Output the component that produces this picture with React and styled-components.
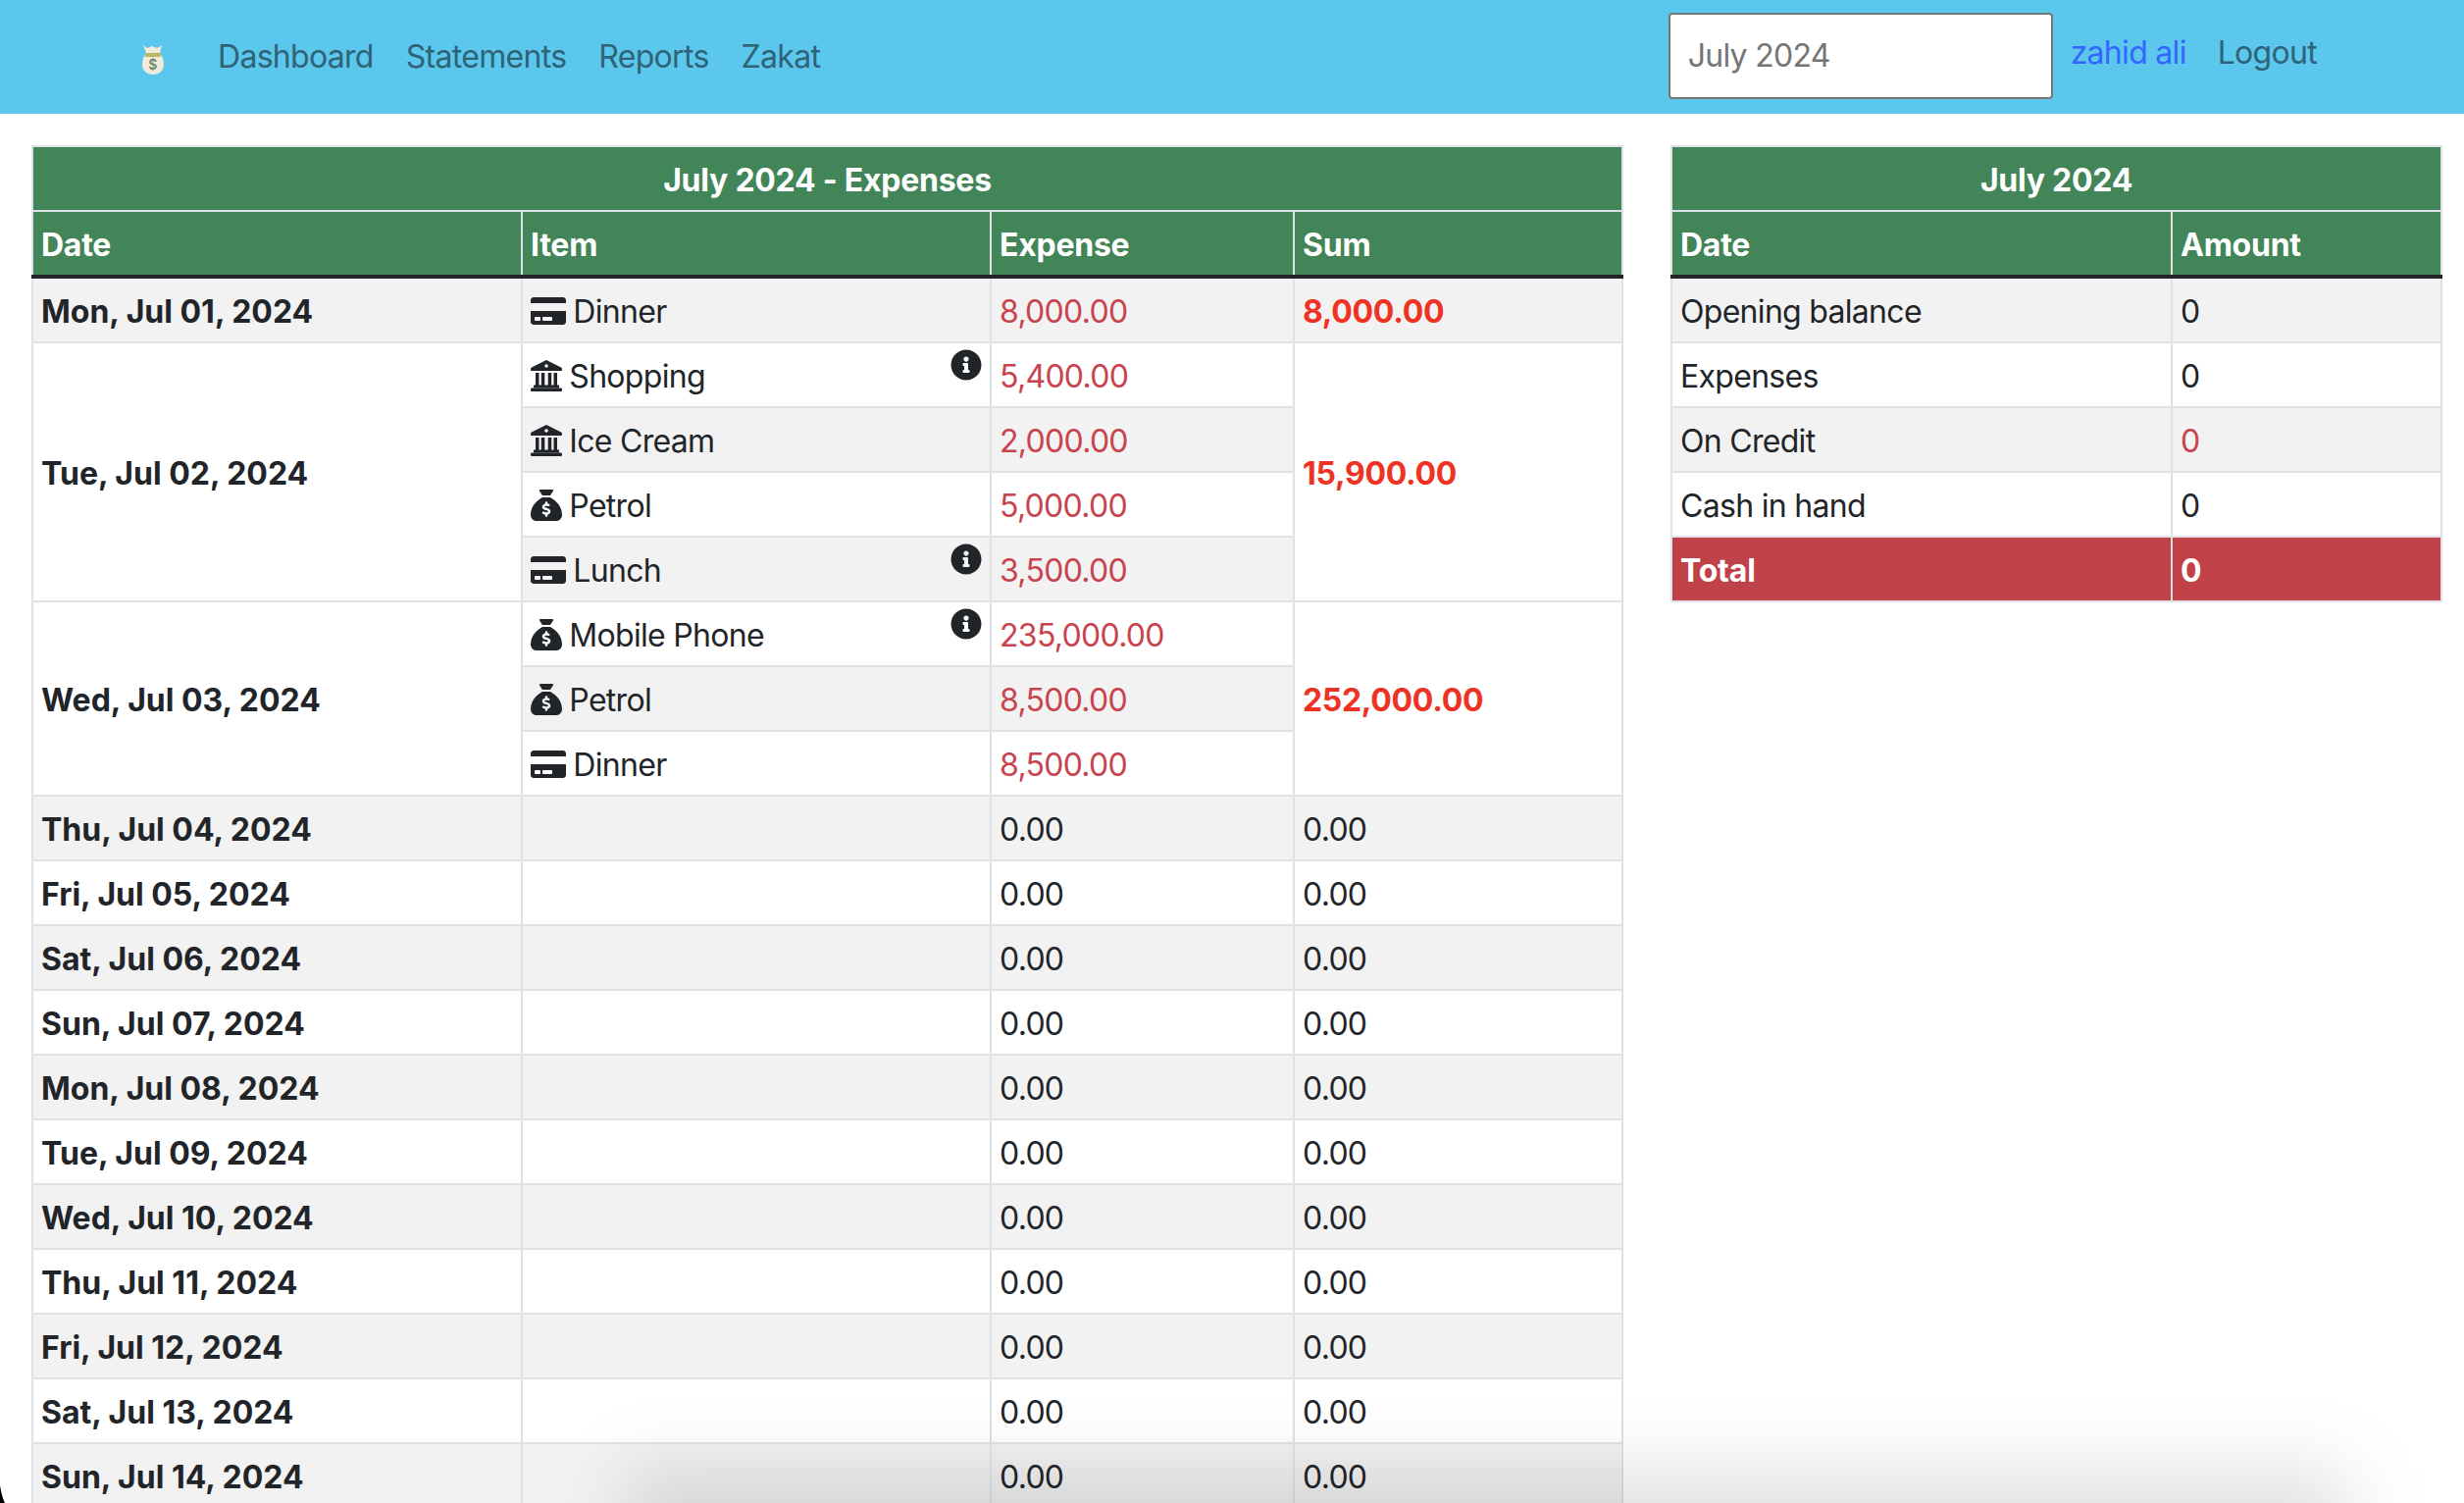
import React from 'react';
import styled, { createGlobalStyle } from 'styled-components';
import { FaCreditCard, FaInfoCircle } from 'react-icons/fa';
import { FaSackDollar } from 'react-icons/fa6';

const GlobalStyle = createGlobalStyle`
  html, body {
    margin: 0;
    height: 1532px;
    overflow: hidden;
    background: #fff;
  }
  body {
    font-family: Inter, "Liberation Sans", sans-serif;
    font-size: 32px;
    line-height: 48px;
    letter-spacing: -0.7px;
    color: #212529;
  }
`;

const Page = styled.div`
  position: relative;
  height: 1532px;
  overflow: hidden;
`;

const Navbar = styled.nav`
  display: flex;
  align-items: center;
  height: 116px;
  padding: 0 150px 0 144px;
  box-sizing: border-box;
  background: #5bc7ec;
`;

const Brand = styled.svg`
  width: 23px;
  height: 30px;
  margin: 6px 39px 0 0;
  flex: none;
`;

const NavLink = styled.a`
  padding: 0 16.5px;
  color: #2f6378;
  &:first-of-type {
    padding-left: 16px;
  }
`;

const NavRight = styled.div`
  display: flex;
  align-items: center;
  margin-left: auto;
`;

const MonthInput = styled.input`
  width: 392px;
  height: 88px;
  box-sizing: border-box;
  margin: -3px 18px 0 0;
  padding: 0 18px;
  border: 2px solid #767676;
  border-radius: 4px;
  background: #fff;
  font: inherit;
  letter-spacing: inherit;
  color: #757575;
  &::placeholder {
    color: #757575;
    opacity: 1;
  }
`;

const UserLink = styled.a`
  margin: -8px 32px 0 0;
  color: #3366ff;
`;

const LogoutLink = styled.a`
  margin-top: -8px;
  color: #2f6378;
`;

const Content = styled.main`
  display: flex;
  align-items: flex-start;
  justify-content: space-between;
  padding: 32px 22px 0 32px;
`;

const Table = styled.table`
  width: ${(p) => p.$width}px;
  flex: none;
  table-layout: fixed;
  border-collapse: collapse;
  border: 2px solid #dee2e6;

  & tbody > tr:nth-child(odd) {
    background: #f2f2f2;
  }
`;

const TitleCell = styled.th`
  padding: 10px 8px 6px;
  border: 2px solid #dee2e6;
  background: #418558;
  color: #fff;
  font-weight: 700;
  letter-spacing: -0.25px;
  text-align: center;
`;

const HeadCell = styled.th`
  padding: 10px 8px 6px;
  border: 2px solid #dee2e6;
  border-bottom: 4px solid #212529;
  background: #418558;
  color: #fff;
  font-weight: 700;
  letter-spacing: -0.25px;
  text-align: left;
`;

const Cell = styled.td`
  padding: 10px 8px 6px;
  border: 2px solid #dee2e6;
  vertical-align: middle;
  white-space: nowrap;
  color: #212529;
`;

const DateCell = styled(Cell)`
  font-weight: 700;
  letter-spacing: 0;
`;

const AmountCell = styled(Cell)`
  color: #c8434e;
`;

const SumCell = styled(Cell)`
  font-weight: 700;
  letter-spacing: -0.3px;
  color: #ee3224;
`;

const TotalCell = styled.td`
  padding: 10px 8px 6px;
  border: 2px solid #dee2e6;
  background: #c14149;
  color: #fff;
  font-weight: 700;
  letter-spacing: -0.2px;
`;

const ItemIcon = styled.span`
  display: inline-block;
  width: ${(p) => p.$width}px;
  height: 32px;
  margin-right: -1px;
  vertical-align: -4px;
  & svg {
    display: block;
    width: 100%;
    height: 100%;
  }
`;

const InfoBadge = styled.span`
  float: right;
  width: 32px;
  height: 32px;
  margin-top: -4px;
  & svg {
    display: block;
    width: 32px;
    height: 32px;
  }
`;

/* 화면 아래쪽 그림자, 모서리 */
const BottomShadow = styled.div`
  position: absolute;
  left: 640px;
  right: 120px;
  bottom: -100px;
  height: 130px;
  background: rgba(0, 0, 0, 0.13);
  filter: blur(40px);
  pointer-events: none;
`;

const CornerMark = styled.svg`
  position: absolute;
  left: 0;
  bottom: 0;
  width: 5px;
  height: 18px;
`;

function BankIcon() {
  return (
    <svg viewBox="0 0 32 32" fill="#212529">
      <path d="M16 0L31 7.5c.6.3 1 .9 1 1.5v1c0 .6-.4 1-1 1H1c-.6 0-1-.4-1-1V9c0-.6.4-1.200 1-1.500z" />
      <circle cx="16" cy="6" r="1.800" fill="#fff" />
      <rect x="5" y="13" width="3.500" height="13" />
      <rect x="10.800" y="13" width="3.500" height="13" />
      <rect x="17.700" y="13" width="3.500" height="13" />
      <rect x="23.500" y="13" width="3.500" height="13" />
      <rect x="3" y="25.500" width="26" height="3" />
      <rect x="0" y="28.500" width="32" height="3.500" rx="1.200" />
    </svg>
  );
}

const ICONS = {
  card: { width: 36, glyph: <FaCreditCard /> },
  bank: { width: 32, glyph: <BankIcon /> },
  cash: { width: 32, glyph: <FaSackDollar /> },
};

const days = [
  {
    date: 'Mon, Jul 01, 2024',
    sum: '8,000.00',
    items: [{ icon: 'card', name: 'Dinner', amount: '8,000.00' }],
  },
  {
    date: 'Tue, Jul 02, 2024',
    sum: '15,900.00',
    items: [
      { icon: 'bank', name: 'Shopping', amount: '5,400.00', info: true },
      { icon: 'bank', name: 'Ice Cream', amount: '2,000.00' },
      { icon: 'cash', name: 'Petrol', amount: '5,000.00' },
      { icon: 'card', name: 'Lunch', amount: '3,500.00', info: true },
    ],
  },
  {
    date: 'Wed, Jul 03, 2024',
    sum: '252,000.00',
    items: [
      { icon: 'cash', name: 'Mobile Phone', amount: '235,000.00', info: true },
      { icon: 'cash', name: 'Petrol', amount: '8,500.00' },
      { icon: 'card', name: 'Dinner', amount: '8,500.00' },
    ],
  },
];

const emptyDays = [
  'Thu, Jul 04, 2024',
  'Fri, Jul 05, 2024',
  'Sat, Jul 06, 2024',
  'Sun, Jul 07, 2024',
  'Mon, Jul 08, 2024',
  'Tue, Jul 09, 2024',
  'Wed, Jul 10, 2024',
  'Thu, Jul 11, 2024',
  'Fri, Jul 12, 2024',
  'Sat, Jul 13, 2024',
  'Sun, Jul 14, 2024',
];

function MoneyBag() {
  return (
    <Brand viewBox="0 0 23 30">
      <path d="M2 0l4 3 5-2 5 2 5-3-2 8c3 4 4 8 4 12 0 6-5 10-11 10S1 26 1 20c0-4 1-8 4-12z" fill="#efeadb" />
      <path d="M4 8h15l2 2-2 2H4z" fill="#b5b86a" />
      <text x="11.5" y="25" fontSize="14" fontFamily="Inter" fontWeight="600" textAnchor="middle" fill="#6f8a6a">$</text>
    </Brand>
  );
}

export default function App() {
  return (
    <Page>
      <GlobalStyle />
      <Navbar>
        <MoneyBag />
        <NavLink>Dashboard</NavLink>
        <NavLink>Statements</NavLink>
        <NavLink>Reports</NavLink>
        <NavLink>Zakat</NavLink>
        <NavRight>
          <MonthInput placeholder="July 2024" />
          <UserLink>zahid ali</UserLink>
          <LogoutLink>Logout</LogoutLink>
        </NavRight>
      </Navbar>

      <Content>
        {/* 지출 표 */}
        <Table $width={1621}>
          <colgroup>
            <col style={{ width: 499 }} />
            <col style={{ width: 478 }} />
            <col style={{ width: 309 }} />
            <col style={{ width: 335 }} />
          </colgroup>
          <thead>
            <tr>
              <TitleCell colSpan={4}>July 2024 - Expenses</TitleCell>
            </tr>
            <tr>
              <HeadCell>Date</HeadCell>
              <HeadCell>Item</HeadCell>
              <HeadCell>Expense</HeadCell>
              <HeadCell>Sum</HeadCell>
            </tr>
          </thead>
          <tbody>
            {days.map((day) =>
              day.items.map((item, i) => (
                <tr key={day.date + i}>
                  {i === 0 && <DateCell rowSpan={day.items.length}>{day.date}</DateCell>}
                  <Cell>
                    {item.info && (
                      <InfoBadge>
                        <FaInfoCircle />
                      </InfoBadge>
                    )}
                    <ItemIcon $width={ICONS[item.icon].width}>{ICONS[item.icon].glyph}</ItemIcon> {item.name}
                  </Cell>
                  <AmountCell>{item.amount}</AmountCell>
                  {i === 0 && <SumCell rowSpan={day.items.length}>{day.sum}</SumCell>}
                </tr>
              ))
            )}
            {emptyDays.map((date) => (
              <tr key={date}>
                <DateCell>{date}</DateCell>
                <Cell />
                <Cell>0.00</Cell>
                <Cell>0.00</Cell>
              </tr>
            ))}
          </tbody>
        </Table>

        {/* 월 요약 표 */}
        <Table $width={785}>
          <colgroup>
            <col style={{ width: 510 }} />
            <col style={{ width: 275 }} />
          </colgroup>
          <thead>
            <tr>
              <TitleCell colSpan={2}>July 2024</TitleCell>
            </tr>
            <tr>
              <HeadCell>Date</HeadCell>
              <HeadCell>Amount</HeadCell>
            </tr>
          </thead>
          <tbody>
            <tr>
              <Cell>Opening balance</Cell>
              <Cell>0</Cell>
            </tr>
            <tr>
              <Cell>Expenses</Cell>
              <Cell>0</Cell>
            </tr>
            <tr>
              <Cell>On Credit</Cell>
              <AmountCell>0</AmountCell>
            </tr>
            <tr>
              <Cell>Cash in hand</Cell>
              <Cell>0</Cell>
            </tr>
            <tr>
              <TotalCell>Total</TotalCell>
              <TotalCell>0</TotalCell>
            </tr>
          </tbody>
        </Table>
      </Content>

      <BottomShadow />
      <CornerMark viewBox="0 0 5 18">
        <path d="M0 0C1 6 2 12 5 18H0z" fill="#000" />
      </CornerMark>
    </Page>
  );
}
